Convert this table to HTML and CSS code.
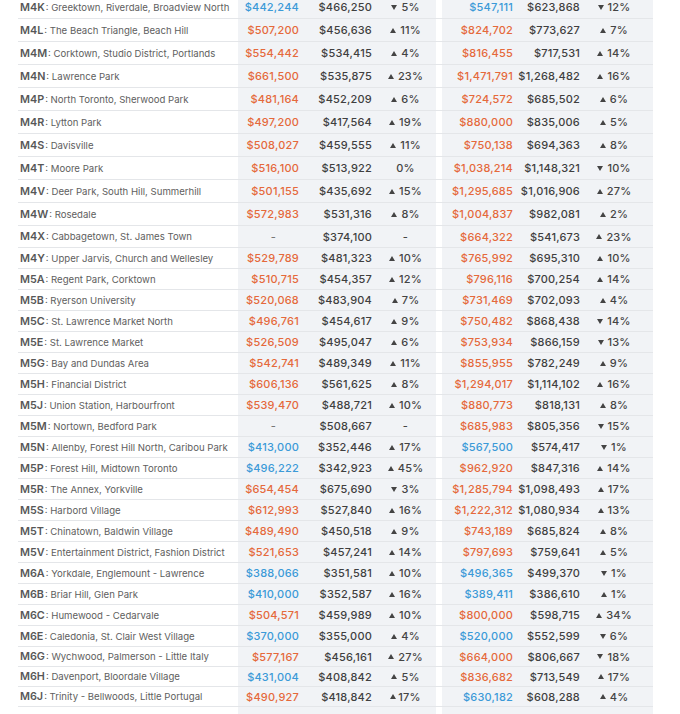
FILE: index.html
```html
<!DOCTYPE html>
<html lang="en">
<head>
<meta charset="utf-8">
<title>Toronto neighbourhood prices</title>
<link rel="stylesheet" href="styles.css">
</head>
<body>
<div class="table">
  <div class="row r23"><div class="name"><b>M4K</b>: Greektown, Riverdale, Broadview North</div><div class="c1 g1 blue">$442,244</div><div class="c2">$466,250</div><div class="c3 g1e"><i class="dn"></i>5%</div><div class="gap"></div><div class="c1 g2 blue">$547,111</div><div class="c2">$623,868</div><div class="c3 g2e"><i class="dn"></i>12%</div></div>
  <div class="row r23"><div class="name"><b>M4L</b>: The Beach Triangle, Beach Hill</div><div class="c1 g1 orange">$507,200</div><div class="c2">$456,636</div><div class="c3 g1e"><i></i>11%</div><div class="gap"></div><div class="c1 g2 orange">$824,702</div><div class="c2">$773,627</div><div class="c3 g2e"><i></i>7%</div></div>
  <div class="row r23"><div class="name"><b>M4M</b>: Corktown, Studio District, Portlands</div><div class="c1 g1 orange">$554,442</div><div class="c2">$534,415</div><div class="c3 g1e"><i></i>4%</div><div class="gap"></div><div class="c1 g2 orange">$816,455</div><div class="c2">$717,531</div><div class="c3 g2e"><i></i>14%</div></div>
  <div class="row r23"><div class="name"><b>M4N</b>: Lawrence Park</div><div class="c1 g1 orange">$661,500</div><div class="c2">$535,875</div><div class="c3 g1e"><i></i>23%</div><div class="gap"></div><div class="c1 g2 orange">$1,471,791</div><div class="c2">$1,268,482</div><div class="c3 g2e"><i></i>16%</div></div>
  <div class="row r23"><div class="name"><b>M4P</b>: North Toronto, Sherwood Park</div><div class="c1 g1 orange">$481,164</div><div class="c2">$452,209</div><div class="c3 g1e"><i></i>6%</div><div class="gap"></div><div class="c1 g2 orange">$724,572</div><div class="c2">$685,502</div><div class="c3 g2e"><i></i>6%</div></div>
  <div class="row r23"><div class="name"><b>M4R</b>: Lytton Park</div><div class="c1 g1 orange">$497,200</div><div class="c2">$417,564</div><div class="c3 g1e"><i></i>19%</div><div class="gap"></div><div class="c1 g2 orange">$880,000</div><div class="c2">$835,006</div><div class="c3 g2e"><i></i>5%</div></div>
  <div class="row r23"><div class="name"><b>M4S</b>: Davisville</div><div class="c1 g1 orange">$508,027</div><div class="c2">$459,555</div><div class="c3 g1e"><i></i>11%</div><div class="gap"></div><div class="c1 g2 orange">$750,138</div><div class="c2">$694,363</div><div class="c3 g2e"><i></i>8%</div></div>
  <div class="row r23"><div class="name"><b>M4T</b>: Moore Park</div><div class="c1 g1 orange">$516,100</div><div class="c2">$513,922</div><div class="c3 g1e">0%</div><div class="gap"></div><div class="c1 g2 orange">$1,038,214</div><div class="c2">$1,148,321</div><div class="c3 g2e"><i class="dn"></i>10%</div></div>
  <div class="row r23"><div class="name"><b>M4V</b>: Deer Park, South Hill, Summerhill</div><div class="c1 g1 orange">$501,155</div><div class="c2">$435,692</div><div class="c3 g1e"><i></i>15%</div><div class="gap"></div><div class="c1 g2 orange">$1,295,685</div><div class="c2">$1,016,906</div><div class="c3 g2e"><i></i>27%</div></div>
  <div class="row r23"><div class="name"><b>M4W</b>: Rosedale</div><div class="c1 g1 orange">$572,983</div><div class="c2">$531,316</div><div class="c3 g1e"><i></i>8%</div><div class="gap"></div><div class="c1 g2 orange">$1,004,837</div><div class="c2">$982,081</div><div class="c3 g2e"><i></i>2%</div></div>
  <div class="row r22"><div class="name"><b>M4X</b>: Cabbagetown, St. James Town</div><div class="c1 g1 dash">-</div><div class="c2">$374,100</div><div class="c3 g1e">-</div><div class="gap"></div><div class="c1 g2 orange">$664,322</div><div class="c2">$541,673</div><div class="c3 g2e"><i></i>23%</div></div>
  <div class="row"><div class="name"><b>M4Y</b>: Upper Jarvis, Church and Wellesley</div><div class="c1 g1 orange">$529,789</div><div class="c2">$481,323</div><div class="c3 g1e"><i></i>10%</div><div class="gap"></div><div class="c1 g2 orange">$765,992</div><div class="c2">$695,310</div><div class="c3 g2e"><i></i>10%</div></div>
  <div class="row"><div class="name"><b>M5A</b>: Regent Park, Corktown</div><div class="c1 g1 orange">$510,715</div><div class="c2">$454,357</div><div class="c3 g1e"><i></i>12%</div><div class="gap"></div><div class="c1 g2 orange">$796,116</div><div class="c2">$700,254</div><div class="c3 g2e"><i></i>14%</div></div>
  <div class="row"><div class="name"><b>M5B</b>: Ryerson University</div><div class="c1 g1 orange">$520,068</div><div class="c2">$483,904</div><div class="c3 g1e"><i></i>7%</div><div class="gap"></div><div class="c1 g2 orange">$731,469</div><div class="c2">$702,093</div><div class="c3 g2e"><i></i>4%</div></div>
  <div class="row"><div class="name"><b>M5C</b>: St. Lawrence Market North</div><div class="c1 g1 orange">$496,761</div><div class="c2">$454,617</div><div class="c3 g1e"><i></i>9%</div><div class="gap"></div><div class="c1 g2 orange">$750,482</div><div class="c2">$868,438</div><div class="c3 g2e"><i class="dn"></i>14%</div></div>
  <div class="row"><div class="name"><b>M5E</b>: St. Lawrence Market</div><div class="c1 g1 orange">$526,509</div><div class="c2">$495,047</div><div class="c3 g1e"><i></i>6%</div><div class="gap"></div><div class="c1 g2 orange">$753,934</div><div class="c2">$866,159</div><div class="c3 g2e"><i class="dn"></i>13%</div></div>
  <div class="row"><div class="name"><b>M5G</b>: Bay and Dundas Area</div><div class="c1 g1 orange">$542,741</div><div class="c2">$489,349</div><div class="c3 g1e"><i></i>11%</div><div class="gap"></div><div class="c1 g2 orange">$855,955</div><div class="c2">$782,249</div><div class="c3 g2e"><i></i>9%</div></div>
  <div class="row"><div class="name"><b>M5H</b>: Financial District</div><div class="c1 g1 orange">$606,136</div><div class="c2">$561,625</div><div class="c3 g1e"><i></i>8%</div><div class="gap"></div><div class="c1 g2 orange">$1,294,017</div><div class="c2">$1,114,102</div><div class="c3 g2e"><i></i>16%</div></div>
  <div class="row"><div class="name"><b>M5J</b>: Union Station, Harbourfront</div><div class="c1 g1 orange">$539,470</div><div class="c2">$488,721</div><div class="c3 g1e"><i></i>10%</div><div class="gap"></div><div class="c1 g2 orange">$880,773</div><div class="c2">$818,131</div><div class="c3 g2e"><i></i>8%</div></div>
  <div class="row"><div class="name"><b>M5M</b>: Nortown, Bedford Park</div><div class="c1 g1 dash">-</div><div class="c2">$508,667</div><div class="c3 g1e">-</div><div class="gap"></div><div class="c1 g2 orange">$685,983</div><div class="c2">$805,356</div><div class="c3 g2e"><i class="dn"></i>15%</div></div>
  <div class="row"><div class="name"><b>M5N</b>: Allenby, Forest Hill North, Caribou Park</div><div class="c1 g1 blue">$413,000</div><div class="c2">$352,446</div><div class="c3 g1e"><i></i>17%</div><div class="gap"></div><div class="c1 g2 blue">$567,500</div><div class="c2">$574,417</div><div class="c3 g2e"><i class="dn"></i>1%</div></div>
  <div class="row"><div class="name"><b>M5P</b>: Forest Hill, Midtown Toronto</div><div class="c1 g1 blue">$496,222</div><div class="c2">$342,923</div><div class="c3 g1e"><i></i>45%</div><div class="gap"></div><div class="c1 g2 orange">$962,920</div><div class="c2">$847,316</div><div class="c3 g2e"><i></i>14%</div></div>
  <div class="row"><div class="name"><b>M5R</b>: The Annex, Yorkville</div><div class="c1 g1 orange">$654,454</div><div class="c2">$675,690</div><div class="c3 g1e"><i class="dn"></i>3%</div><div class="gap"></div><div class="c1 g2 orange">$1,285,794</div><div class="c2">$1,098,493</div><div class="c3 g2e"><i></i>17%</div></div>
  <div class="row"><div class="name"><b>M5S</b>: Harbord Village</div><div class="c1 g1 orange">$612,993</div><div class="c2">$527,840</div><div class="c3 g1e"><i></i>16%</div><div class="gap"></div><div class="c1 g2 orange">$1,222,312</div><div class="c2">$1,080,934</div><div class="c3 g2e"><i></i>13%</div></div>
  <div class="row"><div class="name"><b>M5T</b>: Chinatown, Baldwin Village</div><div class="c1 g1 orange">$489,490</div><div class="c2">$450,518</div><div class="c3 g1e"><i></i>9%</div><div class="gap"></div><div class="c1 g2 orange">$743,189</div><div class="c2">$685,824</div><div class="c3 g2e"><i></i>8%</div></div>
  <div class="row"><div class="name"><b>M5V</b>: Entertainment District, Fashion District</div><div class="c1 g1 orange">$521,653</div><div class="c2">$457,241</div><div class="c3 g1e"><i></i>14%</div><div class="gap"></div><div class="c1 g2 orange">$797,693</div><div class="c2">$759,641</div><div class="c3 g2e"><i></i>5%</div></div>
  <div class="row"><div class="name"><b>M6A</b>: Yorkdale, Englemount - Lawrence</div><div class="c1 g1 blue">$388,066</div><div class="c2">$351,581</div><div class="c3 g1e"><i></i>10%</div><div class="gap"></div><div class="c1 g2 blue">$496,365</div><div class="c2">$499,370</div><div class="c3 g2e"><i class="dn"></i>1%</div></div>
  <div class="row"><div class="name"><b>M6B</b>: Briar Hill, Glen Park</div><div class="c1 g1 blue">$410,000</div><div class="c2">$352,587</div><div class="c3 g1e"><i></i>16%</div><div class="gap"></div><div class="c1 g2 blue">$389,411</div><div class="c2">$386,610</div><div class="c3 g2e"><i></i>1%</div></div>
  <div class="row"><div class="name"><b>M6C</b>: Humewood - Cedarvale</div><div class="c1 g1 orange">$504,571</div><div class="c2">$459,989</div><div class="c3 g1e"><i></i>10%</div><div class="gap"></div><div class="c1 g2 orange">$800,000</div><div class="c2">$598,715</div><div class="c3 g2e"><i></i>34%</div></div>
  <div class="row"><div class="name"><b>M6E</b>: Caledonia, St. Clair West Village</div><div class="c1 g1 blue">$370,000</div><div class="c2">$355,000</div><div class="c3 g1e"><i></i>4%</div><div class="gap"></div><div class="c1 g2 blue">$520,000</div><div class="c2">$552,599</div><div class="c3 g2e"><i class="dn"></i>6%</div></div>
  <div class="row r20"><div class="name"><b>M6G</b>: Wychwood, Palmerson - Little Italy</div><div class="c1 g1 orange">$577,167</div><div class="c2">$456,161</div><div class="c3 g1e"><i></i>27%</div><div class="gap"></div><div class="c1 g2 orange">$664,000</div><div class="c2">$806,667</div><div class="c3 g2e"><i class="dn"></i>18%</div></div>
  <div class="row r20"><div class="name"><b>M6H</b>: Davenport, Bloordale Village</div><div class="c1 g1 blue">$431,004</div><div class="c2">$408,842</div><div class="c3 g1e"><i></i>5%</div><div class="gap"></div><div class="c1 g2 orange">$836,682</div><div class="c2">$713,549</div><div class="c3 g2e"><i></i>17%</div></div>
  <div class="row r20"><div class="name"><b>M6J</b>: Trinity - Bellwoods, Little Portugal</div><div class="c1 g1 orange">$490,927</div><div class="c2">$418,842</div><div class="c3 g1e"><i class="tight"></i>17%</div><div class="gap"></div><div class="c1 g2 blue">$630,182</div><div class="c2">$608,288</div><div class="c3 g2e"><i></i>4%</div></div>
  <div class="row filler"><div class="name"></div><div class="c1"></div><div class="c2"></div><div class="c3"></div><div class="gap"></div><div class="c1"></div><div class="c2"></div><div class="c3"></div></div>
</div>
</body>
</html>
```
FILE: styles.css
```css
html, body {
  margin: 0;
  padding: 0;
  background: #ffffff;
}
body {
  font-family: "Inter", "Lato", sans-serif;
  color: #444;
  overflow: hidden;
}
.table {
  margin-top: -4px;
  padding-left: 18px;
}
.row {
  display: grid;
  grid-template-columns: 220px 64px 73px 61px 6px 74px 67px 70px;
  width: 635px;
  height: 21px;
  box-sizing: border-box;
  border-bottom: 1px solid #e4e6e9;
}
.row.r23 { height: 23px; }
.row.r22 { height: 22px; }
.row.r20 { height: 20px; }
.row.filler { height: 12px; border-bottom: none; }
.row > div {
  display: flex;
  align-items: center;
  white-space: nowrap;
}
.name {
  padding-left: 2px;
  font-size: 9.6px;
  color: #5e5e5e;
  letter-spacing: 0;
}
.name b {
  font-weight: 600;
  font-size: 10.8px;
  color: #575757;
  margin-right: 1px;
}
.c1, .c2, .c3 {
  background: #f1f3f6;
  font-size: 11px;
  letter-spacing: 0.2px;
  font-weight: 500;
}
.c1, .c2 {
  justify-content: flex-end;
  padding-right: 3px;
}
.c2 { color: #3f3f3f; }
.c3 {
  justify-content: center;
  color: #444;
}
.g2e { padding-right: 8px; }
.gap { background: #ffffff; }
.blue { color: #3b9ad8; }
.orange { color: #e5693b; }
.dash {
  justify-content: center !important;
  padding-left: 10px;
  color: #777;
}
.c3 i {
  display: inline-block;
  width: 0;
  height: 0;
  border-left: 3px solid transparent;
  border-right: 3px solid transparent;
  border-bottom: 5px solid #444;
  margin-right: 4px;
}
.c3 i.dn {
  border-bottom: none;
  border-top: 5px solid #444;
}
.c3 i.tight { margin-right: 2px; }
```
